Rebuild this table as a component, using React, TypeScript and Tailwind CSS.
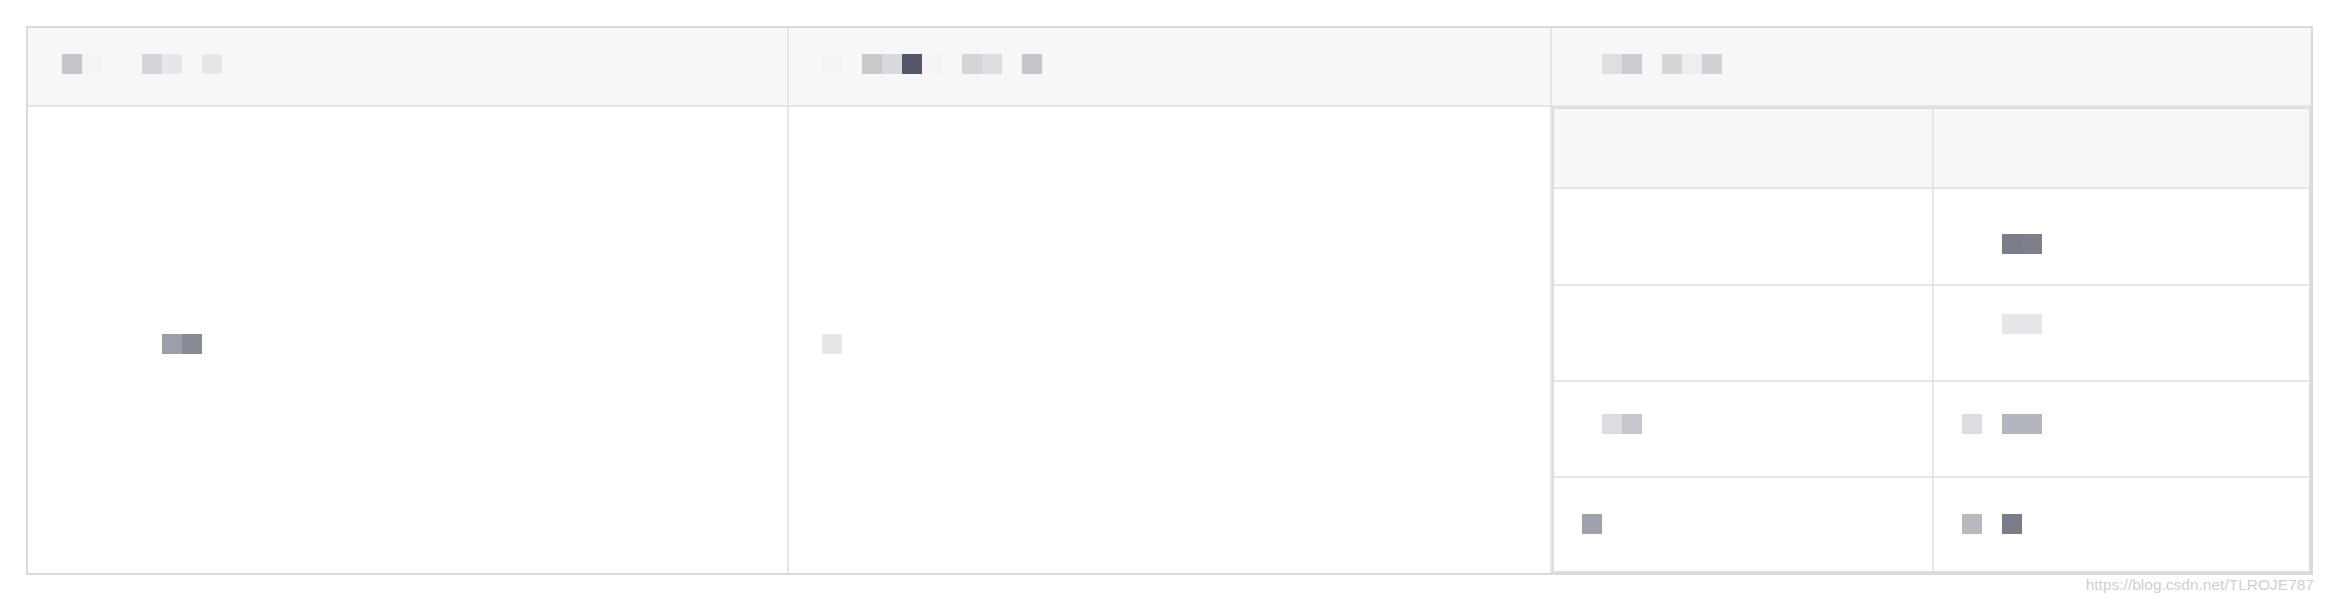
type Tile = string | null;

function Mosaic({ tiles, className = "" }: { tiles: Tile[]; className?: string }) {
  return (
    <div className={`flex ${className}`}>
      {tiles.map((c, i) => (
        <span key={i} className={`block h-5 w-5 shrink-0 ${c ?? "bg-transparent"}`} />
      ))}
    </div>
  );
}

export default function App() {
  return (
    <div className="h-[604px] w-[2326px] bg-white pl-[26px] pt-[26px] font-['Liberation_Sans',Arial,sans-serif]">
      <div className="w-[2287px] border-2 border-[#dadadd]">
        {/* Header */}
        <div className="flex h-[79px] border-b-2 border-[#e5e5e7] bg-[#f7f7f7]">
          <div className="w-[761px] border-r-2 border-[#e5e5e7] pl-[34px] pt-[26px]">
            <Mosaic
              tiles={["bg-[#c6c7cc]", "bg-[#f4f4f6]", null, null, "bg-[#d4d5da]", "bg-[#e6e7ea]", null, "bg-[#e6e7ea]"]}
            />
          </div>
          <div className="w-[763px] border-r-2 border-[#e5e5e7] pl-[33px] pt-[26px]">
            <Mosaic
              tiles={[
                "bg-[#f5f5f6]",
                null,
                "bg-[#c9cace]",
                "bg-[#d9dade]",
                "bg-[#525869]",
                "bg-[#f5f5f6]",
                null,
                "bg-[#d3d4d9]",
                "bg-[#dcdde1]",
                null,
                "bg-[#c5c7cc]",
              ]}
            />
          </div>
          <div className="flex-1 pl-[50px] pt-[26px]">
            <Mosaic tiles={["bg-[#dedfe3]", "bg-[#cbccd1]", null, "bg-[#d5d6da]", "bg-[#eeeef0]", "bg-[#cfd1d5]"]} />
          </div>
        </div>

        {/* Body */}
        <div className="flex h-[466px]">
          <div className="w-[761px] border-r-2 border-[#e5e5e7] pl-[134px] pt-[227px]">
            <Mosaic tiles={["bg-[#9c9ea8]", "bg-[#878b96]"]} />
          </div>
          <div className="w-[763px] border-r-2 border-[#e5e5e7] pl-[33px] pt-[227px]">
            <Mosaic tiles={["bg-[#e5e6e9]"]} />
          </div>
          <div className="flex-1">
            {/* Nested table */}
            <div className="flex h-full flex-col border-2 border-[#dcdde0]">
              <div className="flex h-[80px] border-b-2 border-[#e6e6e8] bg-[#f7f7f7]">
                <div className="w-[380px] border-r-2 border-[#e6e6e8]" />
                <div className="flex-1" />
              </div>
              <div className="flex h-[97px] border-b-2 border-[#e6e6e8]">
                <div className="w-[380px] border-r-2 border-[#e6e6e8]" />
                <div className="flex-1 pl-[68px] pt-[45px]">
                  <Mosaic tiles={["bg-[#7a7e8b]", "bg-[#7d808d]"]} />
                </div>
              </div>
              <div className="flex h-[96px] border-b-2 border-[#e6e6e8]">
                <div className="w-[380px] border-r-2 border-[#e6e6e8]" />
                <div className="flex-1 pl-[68px] pt-[28px]">
                  <Mosaic tiles={["bg-[#e6e7ea]", "bg-[#e6e7ea]"]} />
                </div>
              </div>
              <div className="flex h-[96px] border-b-2 border-[#e6e6e8]">
                <div className="w-[380px] border-r-2 border-[#e6e6e8] pl-[48px] pt-[32px]">
                  <Mosaic tiles={["bg-[#dcdde1]", "bg-[#c7c8cd]"]} />
                </div>
                <div className="flex-1 pl-[28px] pt-[32px]">
                  <Mosaic tiles={["bg-[#dcdde1]", null, "bg-[#b3b6bf]", "bg-[#b3b6bf]"]} />
                </div>
              </div>
              <div className="flex flex-1">
                <div className="w-[380px] border-r-2 border-[#e6e6e8] pl-[28px] pt-[36px]">
                  <Mosaic tiles={["bg-[#9ea1ab]"]} />
                </div>
                <div className="flex-1 pl-[28px] pt-[36px]">
                  <Mosaic tiles={["bg-[#b8bac2]", null, "bg-[#797d8a]"]} />
                </div>
              </div>
            </div>
          </div>
        </div>
      </div>

      {/* Watermark */}
      <div className="w-[2288px] text-right text-[15.5px] leading-5 text-[#d0d0d3]">
        https://blog.csdn.net/TLROJE787
      </div>
    </div>
  );
}
